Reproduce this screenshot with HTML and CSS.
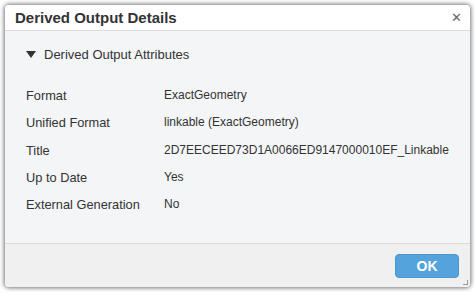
FILE: index.html
```html
<!DOCTYPE html>
<html lang="en">
<head>
    <meta charset="UTF-8">
    <title>Derived Output Details</title>
    <link rel="stylesheet" href="styles.css">
</head>
<body>
<div class="dialog">
    <div class="dialog-header">
        <span class="dialog-title">Derived Output Details</span>
        <span class="close-button">&#x2715;</span>
    </div>
    <div class="dialog-body">
        <div class="section-header">
            <span class="caret"></span>
            <span>Derived Output Attributes</span>
        </div>
        <div class="attr-table">
            <div class="attr-label">Format</div>
            <div class="attr-value">ExactGeometry</div>
            <div class="attr-label">Unified Format</div>
            <div class="attr-value">linkable (ExactGeometry)</div>
            <div class="attr-label">Title</div>
            <div class="attr-value">2D7EECEED73D1A0066ED9147000010EF_Linkable</div>
            <div class="attr-label">Up to Date</div>
            <div class="attr-value">Yes</div>
            <div class="attr-label">External Generation</div>
            <div class="attr-value">No</div>
        </div>
    </div>
    <div class="dialog-footer">
        <button class="ok-button">OK</button>
        <span class="grip"></span>
    </div>
</div>
</body>
</html>
```

FILE: styles.css
```css
body {
    margin: 0;
    padding: 5px;
    font-family: "Liberation Sans", Arial, sans-serif;
    background-color: #ffffff;
}
.dialog {
    position: relative;
    width: 465px;
    height: 282px;
    display: flex;
    flex-direction: column;
    border-radius: 4px;
    overflow: hidden;
    box-shadow: 0 0 4px 1px rgba(0, 0, 0, 0.55);
}
.dialog-header {
    height: 25px;
    display: flex;
    align-items: center;
    justify-content: space-between;
    padding: 0 8px 0 10px;
    background-color: #ffffff;
    border-bottom: 1px solid #dcdcdc;
}
.dialog-title {
    font-size: 15px;
    font-weight: bold;
    color: #333333;
}
.close-button {
    font-size: 13px;
    color: #666666;
    cursor: pointer;
}
.dialog-body {
    flex: 1;
    background-color: #f3f5f6;
    padding: 16px 20px 0 20px;
}
.section-header {
    display: flex;
    align-items: center;
    gap: 8px;
    font-size: 13px;
    color: #333333;
}
.caret {
    width: 0;
    height: 0;
    border-left: 5px solid transparent;
    border-right: 5px solid transparent;
    border-top: 7px solid #333333;
    margin-left: 1px;
}
.attr-table {
    display: grid;
    grid-template-columns: 138px 1fr;
    row-gap: 12.3px;
    margin-top: 26px;
    padding-left: 1px;
    line-height: 15px;
    color: #333333;
}
.attr-label {
    font-size: 12.8px;
}
.attr-value {
    font-size: 12px;
}
.dialog-footer {
    height: 43px;
    display: flex;
    align-items: center;
    justify-content: flex-end;
    padding-right: 11px;
    background-color: #f0f0f0;
    border-top: 1px solid #dcdcdc;
}
.ok-button {
    width: 64px;
    height: 24px;
    background-color: #55a3dc;
    color: #ffffff;
    border: 1px solid #4a96cf;
    border-radius: 4px;
    font-family: "Liberation Sans", Arial, sans-serif;
    font-size: 14px;
    font-weight: bold;
    cursor: pointer;
}
.grip {
    position: absolute;
    right: 2px;
    bottom: 2px;
    width: 4px;
    height: 4px;
    border-right: 1px solid #999999;
    border-bottom: 1px solid #999999;
}
```
